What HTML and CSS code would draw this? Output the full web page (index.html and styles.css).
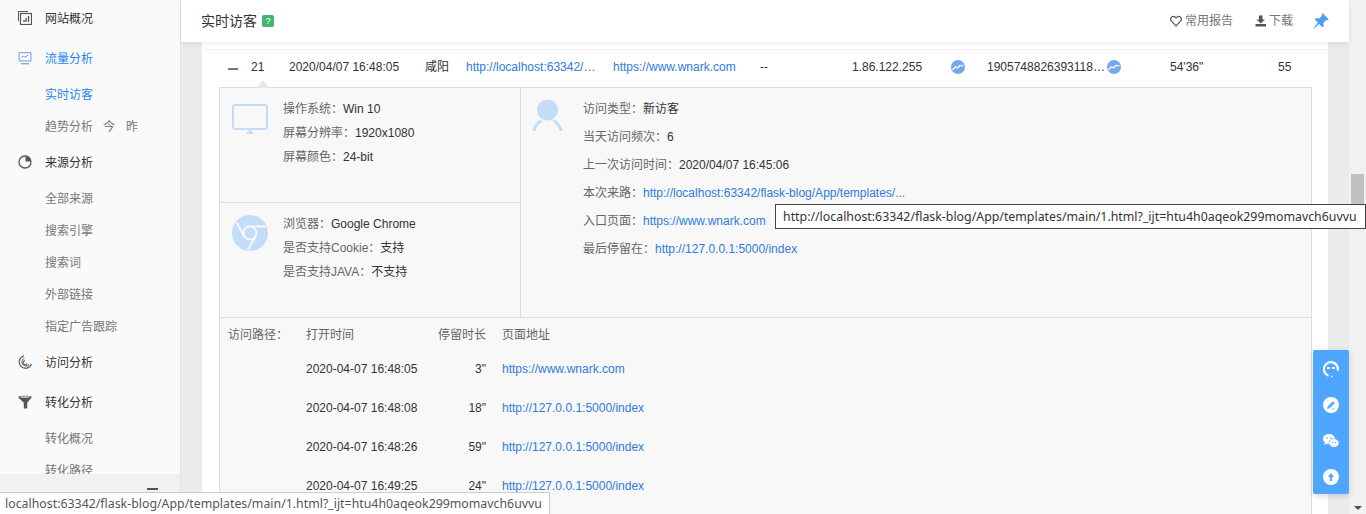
FILE: index.html
```html
<!DOCTYPE html>
<html lang="zh">
<head>
<meta charset="utf-8">
<title>实时访客</title>
<link rel="stylesheet" href="styles.css">
</head>
<body>
<div class="app">
  <aside class="sidebar">
    <nav class="nav">
      <div class="group"><svg class="gi" viewBox="0 0 14 14"><path d="M.5 10V.5H10" fill="none" stroke="#555" stroke-width="1"/><rect x="2.500" y="2.500" width="11" height="11" fill="none" stroke="#555" stroke-width="1.200"/><path d="M6 11V9M8 11V7M10.500 11V5" stroke="#555" stroke-width="1.300"/></svg><span>网站概况</span></div>
      <div class="group active"><svg class="gi" viewBox="0 0 14 14"><rect x=".5" y="1" width="13" height="9.500" rx="1" fill="#7fa8e8"/><rect x="1.700" y="2.200" width="10.600" height="7.100" fill="#fff"/><path d="M3.500 6.500l2-1.500 1.500 1.500 3-2.500" fill="none" stroke="#4d88e6" stroke-width="1"/><path d="M3 12.700h8" stroke="#7fa8e8" stroke-width="1.400"/></svg><span>流量分析</span></div>
      <div class="sub active">实时访客</div>
      <div class="sub trend"><span>趋势分析</span><span>今</span><span>昨</span></div>
      <div class="group"><svg class="gi" viewBox="0 0 14 14"><circle cx="7" cy="7" r="6" fill="none" stroke="#555" stroke-width="1.300"/><path d="M7.500 .8A6 6 0 0 1 13.200 6.500H7.500z" fill="#555"/></svg><span>来源分析</span></div>
      <div class="sub">全部来源</div>
      <div class="sub">搜索引擎</div>
      <div class="sub">搜索词</div>
      <div class="sub">外部链接</div>
      <div class="sub">指定广告跟踪</div>
      <div class="group"><svg class="gi" viewBox="0 0 14 14"><path d="M6 .8A6.300 6.300 0 1 0 13.500 9" fill="none" stroke="#666" stroke-width="1.300"/><path d="M6.500 3.200A4 4 0 1 0 11 9.500" fill="none" stroke="#8a7a6a" stroke-width="1.200"/><path d="M7 5.600A2 2 0 1 0 9 8.500" fill="none" stroke="#666" stroke-width="1.200"/></svg><span>访问分析</span></div>
      <div class="group"><svg class="gi" viewBox="0 0 14 14"><path d="M.3 2C.3.200 13.700.200 13.700 2 13.700 3 10 6.500 9.200 8V13.500H5.800L5.800 8C5 6.500.3 3 .3 2z" fill="#555"/><ellipse cx="7" cy="2" rx="5" ry=".9" fill="#bbb"/></svg><span>转化分析</span></div>
      <div class="sub">转化概况</div>
      <div class="sub">转化路径</div>
    </nav>
    <div class="collapse"><i></i></div>
  </aside>

  <main class="main">
    <header class="topbar">
      <div class="title">实时访客<span class="help">?</span></div>
      <div class="actions">
        <span class="action"><svg class="ai" viewBox="0 0 12 12"><path d="M6 10.800 1.500 6.200a2.800 2.800 0 0 1 0-3.900 2.700 2.700 0 0 1 3.800 0l.7.700.7-.7a2.700 2.700 0 0 1 3.800 0 2.800 2.800 0 0 1 0 3.900z" fill="none" stroke="#555" stroke-width="1.200"/></svg>常用报告</span>
        <span class="action dl"><svg class="ai" viewBox="0 0 12 12"><path d="M4 .5h3.500v4h2.500L5.750 8.500 1.500 4.500H4zM.5 9h10.500v2.500H.5z" fill="#555"/></svg>下载</span>
        <svg class="pin" viewBox="0 0 16 16"><path d="M9.600.3 15.700 6.200l-1.300 1-1.200-.2-2.900 2.900.4 3-1.500 1.300-3-3.100L.8 15.600l-.4-.4 4.400-5.600-3-3.100 1.400-1.400 2.900.4 3-3-.2-1.200z" fill="#4c9df2"/></svg>
      </div>
    </header>

    <section class="panel">
      <div class="row">
        <span class="c c-toggle"><i class="minus"></i></span>
        <span class="c c-num">21</span>
        <span class="c c-date">2020/04/07 16:48:05</span>
        <span class="c c-city">咸阳</span>
        <a class="c c-src">http://localhost:63342/…</a>
        <a class="c c-entry">https://www.wnark.com</a>
        <span class="c c-kw">--</span>
        <span class="c c-ip">1.86.122.255</span>
        <span class="c c-tr"><svg class="trend-ic" viewBox="0 0 14 14"><circle cx="7" cy="7" r="7" fill="#74a9ef"/><path d="M1.500 10 4.500 6.500 6.500 8 9 5.500 12.500 6" fill="none" stroke="#fff" stroke-width="1.200"/></svg></span>
        <span class="c c-id">1905748826393118…<svg class="trend-ic id-ic" viewBox="0 0 14 14"><circle cx="7" cy="7" r="7" fill="#74a9ef"/><path d="M1.500 10 4.500 6.500 6.500 8 9 5.500 12.500 6" fill="none" stroke="#fff" stroke-width="1.200"/></svg></span>
        <span class="c c-dur">54'36"</span>
        <span class="c c-pv">55</span>
      </div>

      <div class="detail">
        <i class="caret"></i>
        <div class="info">
          <div class="info-left">
            <div class="block">
              <svg class="big" viewBox="0 0 36 30"><rect x="1" y="1" width="34" height="24" rx="2" fill="none" stroke="#c3dcf8" stroke-width="2"/><path d="M18 25.500 22 30H14z" fill="#c3dcf8"/></svg>
              <ul class="lines">
                <li><em>操作系统：</em>Win 10</li>
                <li><em>屏幕分辨率：</em>1920x1080</li>
                <li><em>屏幕颜色：</em>24-bit</li>
              </ul>
            </div>
            <div class="block">
              <svg class="big" viewBox="0 0 36 36"><circle cx="18" cy="18" r="18" fill="#c3dcf8"/><circle cx="18" cy="18" r="6.500" fill="#c3dcf8" stroke="#f8f8f8" stroke-width="2"/><path d="M18 11.500H34M12.500 21.500 4.500 7.500M23.500 21.500 15.500 35.500" stroke="#f8f8f8" stroke-width="2" fill="none"/></svg>
              <ul class="lines">
                <li><em>浏览器：</em>Google Chrome</li>
                <li><em>是否支持Cookie：</em>支持</li>
                <li><em>是否支持JAVA：</em>不支持</li>
              </ul>
            </div>
          </div>
          <div class="info-right">
            <svg class="person" viewBox="0 0 31 32"><circle cx="15.500" cy="11" r="10.500" fill="#c3dcf8"/><path d="M2 32C3 26.500 5.500 23.500 9.500 21.500M29 32C28 26.500 25.500 23.500 21.500 21.500" fill="none" stroke="#c3dcf8" stroke-width="3"/></svg>
            <ul class="lines wide">
              <li><em>访问类型：</em>新访客</li>
              <li><em>当天访问频次：</em>6</li>
              <li><em>上一次访问时间：</em>2020/04/07 16:45:06</li>
              <li><em>本次来路：</em><a>http://localhost:63342/flask-blog/App/templates/...</a></li>
              <li><em>入口页面：</em><a>https://www.wnark.com</a></li>
              <li><em>最后停留在：</em><a>http://127.0.0.1:5000/index</a></li>
            </ul>
          </div>
        </div>
        <div class="path">
          <div class="path-head">
            <span class="p-label">访问路径：</span>
            <span class="p-time">打开时间</span>
            <span class="p-stay">停留时长</span>
            <span class="p-url">页面地址</span>
          </div>
          <div class="path-row"><span class="p-label"></span><span class="p-time">2020-04-07 16:48:05</span><span class="p-stay">3"</span><a class="p-url">https://www.wnark.com</a></div>
          <div class="path-row"><span class="p-label"></span><span class="p-time">2020-04-07 16:48:08</span><span class="p-stay">18"</span><a class="p-url">http://127.0.0.1:5000/index</a></div>
          <div class="path-row"><span class="p-label"></span><span class="p-time">2020-04-07 16:48:26</span><span class="p-stay">59"</span><a class="p-url">http://127.0.0.1:5000/index</a></div>
          <div class="path-row"><span class="p-label"></span><span class="p-time">2020-04-07 16:49:25</span><span class="p-stay">24"</span><a class="p-url">http://127.0.0.1:5000/index</a></div>
        </div>
      </div>
    </section>

    <div class="tools">
      <svg viewBox="0 0 16 16"><path d="M5.500 14.800A7 7 0 1 1 14.800 9.500" fill="none" stroke="#fff" stroke-width="2.200"/><rect x="4" y="6" width="3" height="2" fill="#fff"/><rect x="9" y="6" width="3" height="2" fill="#fff"/><path d="M8 15.500h1.500" stroke="#fff" stroke-width="1.500"/></svg>
      <svg viewBox="0 0 16 16"><circle cx="8" cy="8" r="8" fill="#fff"/><path d="M4.500 11.500 5 9.500 10 4.500l1.500 1.500-5 5zM8 12h4" fill="#4ea6ff" stroke="#4ea6ff" stroke-width=".6"/></svg>
      <svg viewBox="0 0 16 14"><ellipse cx="6" cy="5" rx="6" ry="5" fill="#fff"/><path d="M2 8 1.500 11 5 9z" fill="#fff"/><ellipse cx="11" cy="9" rx="5" ry="4.300" stroke="#4ea6ff" stroke-width=".6" fill="#fff"/><circle cx="4" cy="4" r=".8" fill="#4ea6ff"/><circle cx="8" cy="4" r=".8" fill="#4ea6ff"/><circle cx="9.500" cy="8.500" r=".7" fill="#4ea6ff"/><circle cx="12.500" cy="8.500" r=".7" fill="#4ea6ff"/></svg>
      <svg viewBox="0 0 16 16"><circle cx="8" cy="8" r="8" fill="#fff"/><path d="M8 4 11 8H9V12H7V8H5z" fill="#4ea6ff"/></svg>
    </div>
  </main>

  <div class="scrollbar">
    <div class="thumb"></div>
    <i class="arrow"></i>
  </div>
</div>
<div class="tooltip">http://localhost:63342/flask-blog/App/templates/main/1.html?_ijt=htu4h0aqeok299momavch6uvvu</div>
<div class="status">localhost:63342/flask-blog/App/templates/main/1.html?_ijt=htu4h0aqeok299momavch6uvvu</div>
</body>
</html>
```

FILE: styles.css
```css
* { box-sizing: border-box; }
html, body { margin: 0; height: 100%; overflow: hidden; }
body { font: 12px/1.5 "Liberation Sans", "Noto Sans CJK SC", sans-serif; color: #333; background: #ebebeb; }
ul { list-style: none; margin: 0; padding: 0; }
em { font-style: normal; color: #666; }
a { color: #2f7be0; }
.app { display: flex; height: 514px; overflow: hidden; }

.sidebar { flex: 0 0 181px; display: flex; flex-direction: column; height: 514px; background: #fafafa; border-right: 1px solid #e3e3e3; }
.nav { height: 474px; overflow: hidden; }
.group { height: 40px; display: flex; align-items: center; padding-left: 18px; color: #333; }
.group:first-child { margin-top: -1px; }
.gi { width: 14px; height: 14px; margin: -2px 13px 0 0; }
.group.active { color: #1f86f0; }
.sub { height: 32px; line-height: 32px; padding-left: 45px; color: #777; }
.sub.active { color: #1f86f0; }
.trend { display: flex; }
.trend span:nth-child(2) { margin-left: 10px; }
.trend span:nth-child(3) { margin-left: 11px; }
.collapse { flex: 1; background: #f0f1f3; padding: 14px 0 0 147px; }
.collapse i { display: block; width: 11px; height: 2px; background: #555; }

.main { flex: 0 0 1168px; position: relative; display: flex; flex-direction: column; height: 514px; }
.topbar { flex: 0 0 42px; display: flex; justify-content: space-between; align-items: center; padding: 0 20px; background: #fff; box-shadow: 0 2px 5px rgba(0,0,0,.07); position: relative; z-index: 2; }
.title { font-size: 14px; display: flex; align-items: center; color: #333; }
.help { width: 12px; height: 12px; margin-left: 5px; border-radius: 2px; background: #42b56f; color: #fff; font-size: 9px; line-height: 12px; text-align: center; }
.actions { display: flex; align-items: center; color: #777; }
.action { display: flex; align-items: center; margin-right: 22px; }
.action.dl { margin-right: 20px; }
.action.dl .ai { margin-right: 2px; }
.ai { width: 12px; height: 12px; margin-right: 3px; }
.pin { width: 16px; height: 16px; }

.panel { flex: 1; margin: 0 21px; padding: 7px 16px 0 17px; background: #fff; overflow: hidden; }
.row { display: flex; align-items: center; height: 38px; border-top: 1px solid #eee; margin: 0 -16px 0 -17px; padding: 0 0 4px 26px; }
.c { flex: none; white-space: nowrap; }
.c-toggle { width: 23px; display: flex; }
.minus { width: 10px; height: 2px; background: #777; margin-top: 5px; }
.c-num { width: 38px; }
.c-date { width: 136px; }
.c-city { width: 41px; }
.c-src { width: 147px; }
.c-entry { width: 147px; }
.c-kw { width: 92px; }
.c-ip { width: 99px; }
.c-tr { width: 36px; display: flex; }
.c-id { width: 183px; display: flex; align-items: center; }
.c-dur { width: 108px; }
.trend-ic { width: 14px; height: 14px; }
.id-ic { margin-left: 2px; }

.detail { position: relative; border: 1px solid #ddd; border-bottom: 0; background: #f8f8f8; height: 500px; }
.caret { position: absolute; left: 37px; top: -8px; width: 0; height: 0; border: 6px solid transparent; border-top: 0; border-bottom: 8px solid #e6e6e6; }
.info { display: flex; height: 230px; border-bottom: 1px solid #ddd; }
.info-left { flex: 0 0 301px; border-right: 1px solid #ddd; display: flex; flex-direction: column; }
.block { display: flex; flex: 0 0 114px; padding: 9px 0 0 12px; }
.block + .block { flex: 1; border-top: 1px solid #ddd; }
.big { width: 36px; height: 36px; margin: 0 15px 0 0; flex: none; }
.block:first-child .big { height: 30px; margin-top: 7px; }
.block + .block .big { margin-top: 3px; }
.lines li { line-height: 24px; }
.info-right { flex: 1; display: flex; padding: 7px 0 0 11px; }
.person { width: 31px; height: 32px; margin: 4px 20px 0 0; flex: none; }
.wide li { line-height: 28px; }

.path { padding: 6px 0 0 8px; }
.path-head { display: flex; height: 22px; line-height: 22px; color: #666; }
.path-row { display: flex; height: 39px; line-height: 39px; }
.path-head + .path-row { margin-top: 4px; }
.p-label { flex: 0 0 78px; }
.p-time { flex: 0 0 132px; }
.p-stay { flex: 0 0 48px; text-align: right; }
.p-url { margin-left: 16px; }
.path-head .p-url { color: #666; }

.tools { position: absolute; right: 0; top: 350px; width: 36px; height: 144px; background: #4ea6ff; border-radius: 2px; box-shadow: 0 2px 6px rgba(0,0,0,.15); display: flex; flex-direction: column; align-items: center; justify-content: space-between; padding: 11px 0 9px; z-index: 3; }
.tools svg { width: 16px; height: 16px; }

.scrollbar { flex: 1; background: #f1f1f1; position: relative; padding: 174px 2px 0; }
.thumb { height: 42px; background: #c1c1c1; }
.arrow { position: absolute; left: 5px; bottom: 4px; width: 0; height: 0; border: 4px solid transparent; border-bottom: 0; border-top: 4px solid #505050; }

.tooltip { position: absolute; left: 775px; top: 204px; width: 591px; height: 25px; padding-left: 7px; background: #fff; border: 1px solid #444; font: 12.35px/23px "Noto Sans", sans-serif; color: #333; white-space: nowrap; overflow: hidden; z-index: 5; }
.status { position: absolute; left: 0; top: 492px; width: 550px; height: 22px; padding-left: 5px; background: #fff; border: 1px solid #ccc; border-width: 1px 1px 0 0; font: 12.35px/22px "Noto Sans", sans-serif; color: #555; white-space: nowrap; z-index: 5; }
```
